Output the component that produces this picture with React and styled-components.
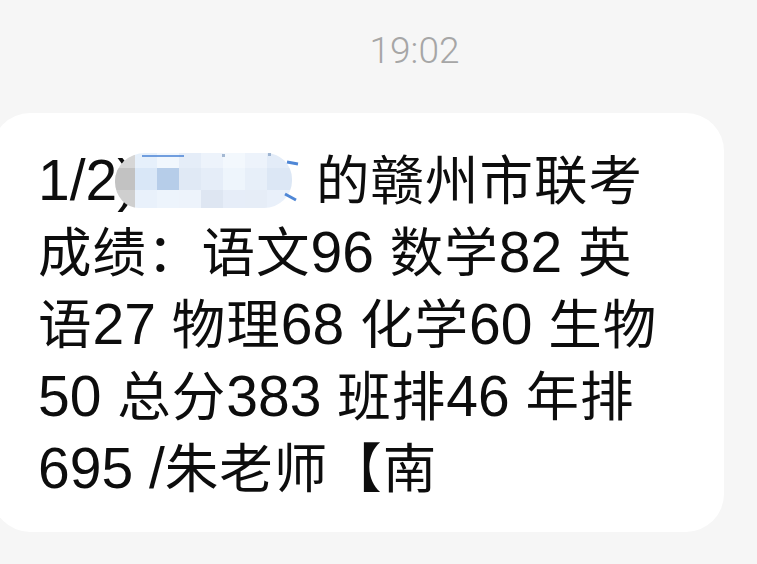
import React from "react";
import styled, { createGlobalStyle } from "styled-components";

const GlobalStyle = createGlobalStyle`
  html, body {
    margin: 0;
    padding: 0;
    background: #f6f6f6;
  }
  body {
    width: 757px;
    height: 564px;
    overflow: hidden;
  }
`;

const mosaic = [
  ["#d6d6d6", "#e6f0fb", "#f1f7fd", "#e5edf8", "#edf3fb", "#f3f8fd", "#edf3fb", "#e3ecf8"],
  ["#c2c2c2", "#d9e7f7", "#b6cde9", "#e0e9f5", "#e5edf8", "#eef5fc", "#e7eff9", "#dce7f5"],
  ["#cfcfcf", "#e9f1fb", "#edf4fc", "#edf3fb", "#dee6f2", "#e6edf8", "#e6edf7", "#e9f0fa"]
];

const lines = [
  "成绩：语文96 数学82 英",
  "语27 物理68 化学60 生物",
  "50 总分383 班排46 年排",
  "695 /朱老师【南"
];

// latin runs are set a touch larger than the CJK glyphs, like the phone font
const Mixed = ({ text }) =>
  text.split(/([0-9/() ]+)/).map((part, i) =>
    /^[0-9/() ]+$/.test(part) ? <Latin key={i}>{part}</Latin> : part
  );

const App = () => {
  return (
    <>
      <GlobalStyle />
      <Page>
        <TimeRow>
          <Time>19:02</Time>
        </TimeRow>
        <Bubble>
          <Line>
            <Mixed text="1/2)" />
            <Redacted>
              <Mosaic>
                {mosaic.map((row, r) =>
                  row.map((color, c) => <Cell key={`${r}-${c}`} color={color} />)
                )}
              </Mosaic>
              <Remnants width="190" height="55" viewBox="0 0 190 55">
                <line x1="27" y1="3" x2="69" y2="3" stroke="#5b8fd9" strokeWidth="2" opacity="0.85" />
                <rect x="107" y="1" width="3" height="3" fill="#6f8fb8" opacity="0.6" />
                <rect x="153" y="0" width="3" height="3" fill="#6f8fb8" opacity="0.6" />
                <line x1="172" y1="9" x2="183" y2="11" stroke="#4f87d6" strokeWidth="3" />
                <line x1="170" y1="41" x2="181" y2="47" stroke="#4f87d6" strokeWidth="3" />
              </Remnants>
            </Redacted>
            <Mixed text=" 的赣州市联考" />
          </Line>
          {lines.map(text => (
            <Line key={text}>
              <Mixed text={text} />
            </Line>
          ))}
        </Bubble>
      </Page>
    </>
  );
};

const Page = styled.div`
  display: flex;
  flex-direction: column;
  background: #f6f6f6;
  min-height: 564px;
`;

const TimeRow = styled.div`
  display: flex;
  justify-content: center;
  padding: 32px 0 0 72px;
`;

const Time = styled.span`
  font-family: Roboto, "Liberation Sans", sans-serif;
  font-weight: 300;
  font-size: 37px;
  line-height: 37px;
  color: #a6a6a6;
`;

const Bubble = styled.div`
  margin: 44px 0 0 -8px;
  width: 732px;
  box-sizing: border-box;
  padding: 28px 0 31px 46px;
  background: #ffffff;
  border-radius: 38px;
`;

const Line = styled.div`
  height: 72px;
  font-family: "Noto Sans CJK SC", "Liberation Sans", sans-serif;
  font-size: 53.5px;
  line-height: 72px;
  letter-spacing: 1px;
  color: #0d0d0d;
  white-space: pre;
`;

const Latin = styled.span`
  font-family: "Liberation Sans", "Noto Sans CJK SC", sans-serif;
  font-size: 57px;
  line-height: 40px;
  letter-spacing: 0;
`;

const Redacted = styled.span`
  position: relative;
  display: inline-block;
  vertical-align: top;
  margin: 12px 8px 0 -21px;
  width: 177px;
  height: 55px;
`;

const Mosaic = styled.span`
  display: grid;
  grid-template-columns: 20px repeat(6, 22px) 25px;
  grid-template-rows: 15px 22px 18px;
  width: 100%;
  height: 100%;
  border-radius: 30px 26px 28px 24px / 28px 26px 27px 26px;
  overflow: hidden;
  filter: blur(0.6px);
`;

const Cell = styled.span`
  background: ${props => props.color};
`;

const Remnants = styled.svg`
  position: absolute;
  left: 0;
  top: 0;
  overflow: visible;
`;

export default App;
